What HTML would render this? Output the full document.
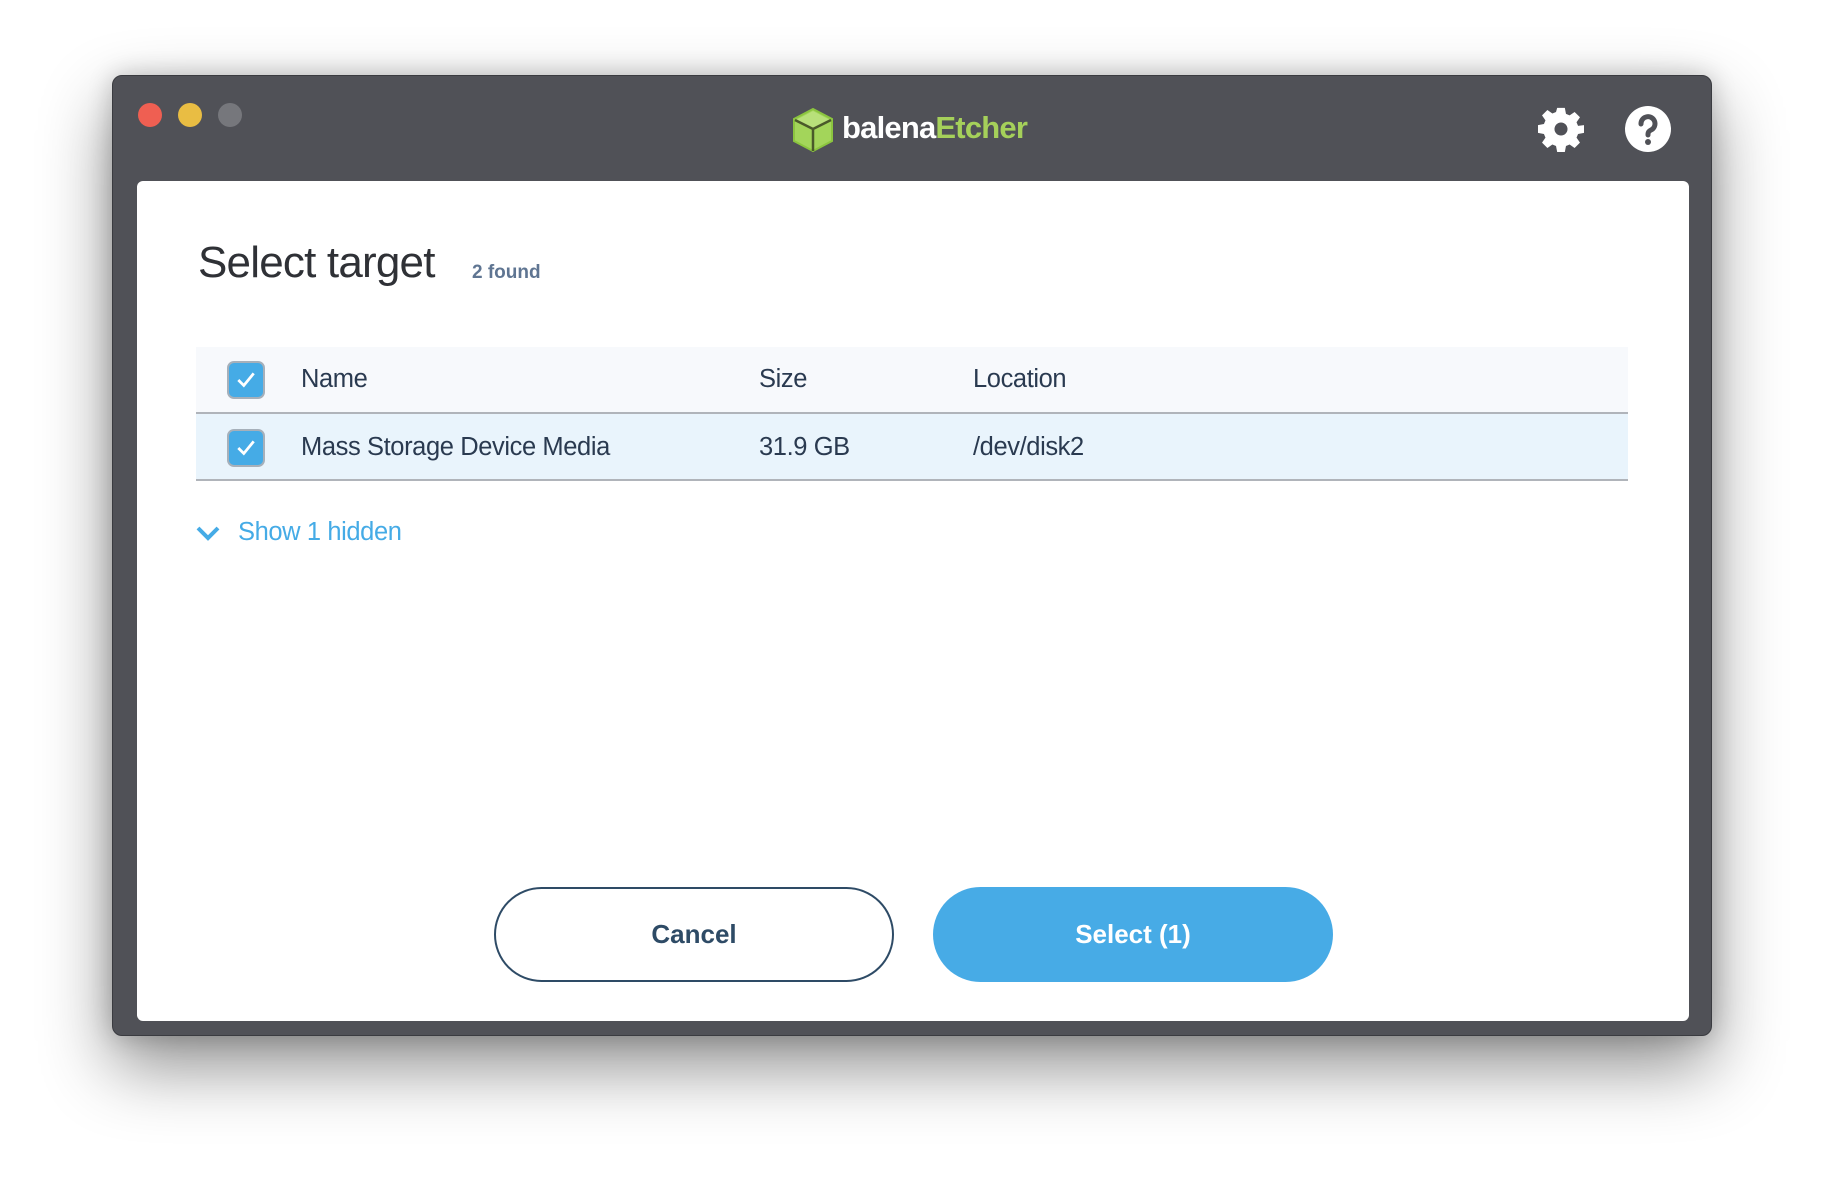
<!DOCTYPE html>
<html><head><meta charset="utf-8"><style>
*{margin:0;padding:0;box-sizing:border-box}
html,body{width:1824px;height:1184px;background:#fff;overflow:hidden;font-family:"Liberation Sans",sans-serif}
.win{position:absolute;left:112px;top:75px;width:1600px;height:961px;background:#505157;border-radius:10px;border:1px solid #3a3b40;box-shadow:0 30px 70px rgba(0,0,0,.45),0 0 25px rgba(0,0,0,.2)}
.dot{position:absolute;top:27px;width:24px;height:24px;border-radius:50%}
.panel{position:absolute;left:24px;top:105px;width:1552px;height:840px;background:#fff;border-radius:6px}
.abs{position:absolute;white-space:nowrap}
.t{font-size:25.5px;color:#2a3a50;letter-spacing:-.4px}
.cb{position:absolute;width:38px;height:38px;border-radius:7px;background:#45abe6;border:2px solid #a6b0ba}
.btn{position:absolute;top:706px;width:400px;height:95px;border-radius:48px;font-weight:bold;font-size:26px;display:flex;align-items:center;justify-content:center}
</style></head><body>
<div class="win">
 <div class="dot" style="left:25px;background:#ef5f52"></div>
 <div class="dot" style="left:65px;background:#e9bd43"></div>
 <div class="dot" style="left:105px;background:#76777c"></div>
 <svg class="abs" style="left:678px;top:31px" width="44" height="46" viewBox="0 0 44 46">
  <polygon points="22,2 41,12 41,34 22,44 3,34 3,12" fill="#a3d55a" stroke="#8bc53f" stroke-width="2"/>
  <polygon points="22,4 39,13 22,22 5,13" fill="#b8e07a"/>
  <path d="M22,22 L22,44 M22,22 L40,13 M22,22 L4,13" stroke="#4a5a2a" stroke-width="2.5" fill="none"/>
 </svg>
 <div class="abs" style="left:729px;top:34px;font-size:31px;font-weight:bold;color:#fff;letter-spacing:-.8px">balena<span style="color:#a5d05a">Etcher</span></div>
 <svg class="abs" style="left:1425px;top:30px" width="46" height="46" viewBox="0 0 24 24"><path fill="#fff" fill-rule="evenodd" d="M10 1h4l.6 3.1 1.9.8 2.6-1.8 2.8 2.8-1.8 2.6.8 1.9L24 10v4l-3.1.6-.8 1.9 1.8 2.6-2.8 2.8-2.6-1.8-1.9.8L14 24h-4l-.6-3.1-1.9-.8-2.6 1.8-2.8-2.8 1.8-2.6-.8-1.9L0 14v-4l3.1-.6.8-1.9L2.1 4.9 4.9 2.1l2.6 1.8 1.9-.8zM12 8.6a3.4 3.4 0 1 0 0 6.8 3.4 3.4 0 0 0 0-6.8z"/></svg>
 <svg class="abs" style="left:1512px;top:30px" width="46" height="46" viewBox="0 0 46 46"><circle cx="23" cy="23" r="23" fill="#fff"/><path d="M16 18a7 7 0 1 1 10 6c-2 1-3 2-3 4v1" stroke="#505157" stroke-width="5" fill="none" stroke-linecap="round"/><circle cx="23" cy="36" r="3" fill="#505157"/></svg>
 <div class="panel">
  <div class="abs" style="left:61px;top:57px;font-size:44px;color:#2f3136;letter-spacing:-.8px">Select target</div>
  <div class="abs" style="left:335px;top:81px;font-size:19px;font-weight:bold;color:#5f7592">2 found</div>
  <div class="abs" style="left:59px;top:166px;width:1432px;height:67px;background:#f7f9fc;border-bottom:2px solid #b0b4ba"></div>
  <div class="abs" style="left:59px;top:233px;width:1432px;height:67px;background:#e9f4fc;border-bottom:2px solid #b0b4ba"></div>
  <div class="cb" style="left:90px;top:180px"></div>
  <div class="cb" style="left:90px;top:248px"></div>
  <svg class="abs" style="left:98px;top:188px" width="22" height="22" viewBox="0 0 20 20"><path d="M3 10l5 5 9-11" stroke="#fff" stroke-width="2.5" fill="none"/></svg>
  <svg class="abs" style="left:98px;top:256px" width="22" height="22" viewBox="0 0 20 20"><path d="M3 10l5 5 9-11" stroke="#fff" stroke-width="2.5" fill="none"/></svg>
  <div class="abs t" style="left:164px;top:184px">Name</div>
  <div class="abs t" style="left:622px;top:184px">Size</div>
  <div class="abs t" style="left:836px;top:184px">Location</div>
  <div class="abs t" style="left:164px;top:252px">Mass Storage Device Media</div>
  <div class="abs t" style="left:622px;top:252px">31.9 GB</div>
  <div class="abs t" style="left:836px;top:252px">/dev/disk2</div>
  <svg class="abs" style="left:58px;top:343px" width="26" height="18" viewBox="0 0 26 18"><path d="M3 4l10 10 10-10" stroke="#45abe6" stroke-width="4" fill="none"/></svg>
  <div class="abs" style="left:101px;top:337px;font-size:25.5px;color:#45abe6;letter-spacing:-.4px">Show 1 hidden</div>
  <div class="btn" style="left:357px;border:2px solid #2e4b66;color:#2e4b66;background:#fff">Cancel</div>
  <div class="btn" style="left:796px;background:#47abe6;color:#fff">Select (1)</div>
 </div>
</div>
</body></html>
